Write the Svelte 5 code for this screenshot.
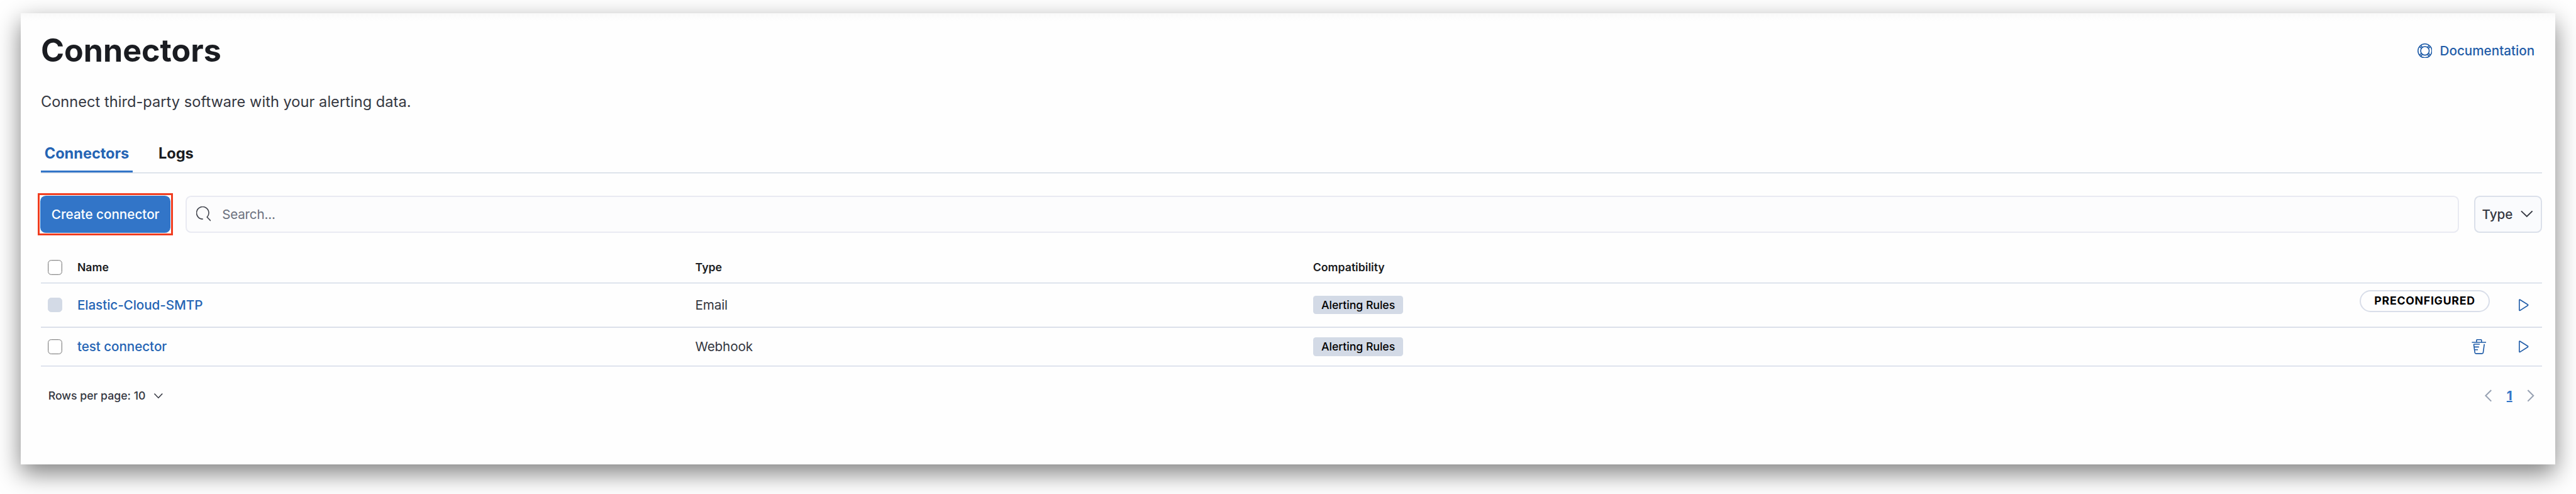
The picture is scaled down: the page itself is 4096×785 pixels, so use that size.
<script>
  const rows = [
    { name: 'Elastic-Cloud-SMTP', type: 'Email', tag: 'Alerting Rules', preconfigured: true },
    { name: 'test connector', type: 'Webhook', tag: 'Alerting Rules', preconfigured: false }
  ];
</script>

{#snippet play()}
  <svg class="icon" viewBox="0 0 16 16"><path d="M3.3 2.6v10.8c0 .4.4.6.7.4l8.4-5.3c.4-.2.4-.8 0-1L4 2.2c-.3-.2-.7 0-.7.4Z" /></svg>
{/snippet}

<main class="card">
  <header class="head">
    <h1>Connectors</h1>
    <a class="docs" href="#docs">
      <svg class="icon" viewBox="0 0 16 16">
        <circle cx="8" cy="8" r="7.5" /><circle cx="8" cy="8" r="4.6" />
        <path d="M3.5 2.2 5.5 4.5M2.2 3.5 4.5 5.5M12.5 2.2 10.5 4.5M13.8 3.5 11.5 5.5M3.5 13.8 5.5 11.5M2.2 12.5 4.5 10.5M12.5 13.8 10.5 11.5M13.8 12.5 11.5 10.5" />
      </svg>
      <span>Documentation</span>
    </a>
  </header>
  <p class="desc">Connect third-party software with your alerting data.</p>

  <nav class="tabs">
    <a class="tab active" href="#connectors">Connectors</a>
    <a class="tab" href="#logs">Logs</a>
  </nav>

  <div class="toolbar">
    <div class="highlight"><button class="create">Create connector</button></div>
    <div class="search">
      <svg class="icon" viewBox="0 0 16 16"><path d="M7.3 13.6A6.6 6.6 0 1 1 11.7 11.6L15.6 15.6" /></svg>
      <span>Search...</span>
    </div>
    <button class="filter"><span>Type</span>
      <svg class="icon" viewBox="0 0 16 16"><path d="m2 5 6 5.8L14 5" /></svg>
    </button>
  </div>

  <section class="table">
    <div class="row header">
      <i class="check"></i><b>Name</b><b>Type</b><b>Compatibility</b><span></span>
    </div>
    {#each rows as r}
      <div class="row" class:first={r.preconfigured}>
        <i class="check" class:disabled={r.preconfigured}></i>
        <a href="#edit">{r.name}</a>
        <span class="type">{r.type}</span>
        <span class="badge">{r.tag}</span>
        <div class="actions">
          {#if r.preconfigured}
            <span class="pill">PRECONFIGURED</span>
          {:else}
            <svg class="icon" viewBox="0 0 16 16">
              <path d="M.3 3.4h15.4M5.3 3.4V1.3c0-.5.3-.8.8-.8h3.8c.5 0 .8.3.8.8v2.1M2.3 5.4h6.5M2.3 5.4l1.2 9c.1.7.5 1.1 1.2 1.1h6.6c.7 0 1.1-.4 1.2-1.1l1.2-9M3 8.4h5M3.4 11.4h3.4" />
            </svg>
          {/if}
          {@render play()}
        </div>
      </div>
    {/each}
  </section>

  <footer class="foot">
    <div class="per"><span>Rows per page: 10</span>
      <svg class="icon" viewBox="0 0 16 16"><path d="m2.2 5 5.8 6 5.8-6" /></svg>
    </div>
    <div class="pages">
      <svg class="icon" viewBox="0 0 16 16"><path d="M11 2 5 8l6 6" /></svg>
      <span class="num">1</span>
      <svg class="icon" viewBox="0 0 16 16"><path d="m5 2 6 6-6 6" /></svg>
    </div>
  </footer>
</main>

<style>
  :global(html) { font-size: 98.367px; }
  :global(body) { background: #fff; }
  :global(#app) { height: 785px; overflow: hidden; display: flow-root; }
  * { box-sizing: border-box; }
  .card {
    margin: 0.21rem 0.34rem 0;
    height: 7.29rem;
    padding: 0.24rem 0.21rem 0 0.32rem;
    background: linear-gradient(#f9f9f9, #fefefe 12px);
    box-shadow: 0 14px 36px rgba(0, 0, 0, 0.5);
    font-family: Inter, sans-serif;
    font-size: 0.21rem;
    line-height: 0.3rem;
    color: #343741;
  }
  a { text-decoration: none; color: #2464b4; }
  button { font: inherit; padding: 0; cursor: pointer; }
  .icon { width: 0.24rem; height: 0.24rem; flex: none; fill: none; stroke: currentColor; stroke-width: 1.1; display: block; }
  .head { display: flex; justify-content: space-between; align-items: center; height: 0.74rem; }
  h1 { margin: 0; font-size: 0.51rem; font-weight: 700; color: #1a1c21; line-height: 0.74rem; }
  .docs { display: flex; align-items: center; gap: 0.125rem; margin-right: 0.12rem; font-weight: 500; color: #1f5ca8; }
  .desc { margin: 0.27rem 0 0; font-size: 0.24rem; line-height: 0.36rem; letter-spacing: 0.0003rem; }
  .tabs { display: flex; gap: 0.355rem; margin-top: 0.33rem; height: 0.66rem; box-shadow: inset 0 -1px #eef1f6, inset 0 -2px #d0d7e3; }
  .tab { height: 0.64rem; padding: 0 0.06rem; line-height: 0.67rem; font-size: 0.24rem; font-weight: 700; color: #1a1c21; letter-spacing: -0.0005rem; }
  .tab.active { color: #2464b4; border-bottom: 3px solid #3275c8; }
  .toolbar { display: flex; align-items: center; margin-top: 0.305rem; margin-left: -0.05rem; height: 0.69rem; }
  .highlight { border: 3px solid #f03d20; padding: 1px; width: 2.19rem; height: 0.68rem; display: flex; }
  .create { flex: 1; border: 0; border-radius: 0.09rem; background: #3275c8; color: #fff; font-weight: 500; }
  .search { flex: 1; height: 0.6rem; margin: 0 0.24rem 0 0.2rem; border: 2px solid #e9eaf2; border-radius: 0.09rem; background: #fcfcfd; display: flex; align-items: center; gap: 0.18rem; padding-left: 0.15rem; color: #6c727f; letter-spacing: -0.002rem; }
  .search .icon { color: #43464f; }
  .filter { width: 1.1rem; height: 0.6rem; border: 2px solid #dbe0ea; border-radius: 0.09rem; background: #fafbfd; display: flex; align-items: center; justify-content: space-between; padding: 0 0.1rem 0 0.11rem; font-weight: 500; color: #343741; }
  .filter .icon { stroke-width: 1.3; }
  .row { display: grid; grid-template-columns: 0.48rem 9.99rem 9.985rem 1fr auto; align-items: center; height: 0.62rem; padding-left: 0.11rem; border-bottom: 1px solid #d0d7e5; box-shadow: 0 1px #eef1f6; }
  .header { height: 0.77rem; padding-top: 0.27rem; font-size: 0.18rem; color: #1a1c21; }
  .header b { font-weight: 600; }
  .row.first { height: 0.72rem; border-bottom: 2px solid #dbe0ea; box-shadow: none; }
  .row a { font-weight: 500; letter-spacing: -0.0006rem; }
  .type { letter-spacing: -0.0015rem; }
  .check { width: 0.24rem; height: 0.24rem; border: 1px solid #8c8c8c; box-shadow: inset 0 0 0 1px #dedede; border-radius: 0.055rem; background: #fff; }
  .check.disabled { border-color: #d3dae6; background: #d3dae6; box-shadow: none; }
  .badge { justify-self: start; height: 0.3rem; width: 1.46rem; text-align: center; background: #d3dae6; border-radius: 0.045rem; font-size: 0.18rem; font-weight: 500; letter-spacing: -0.0005rem; color: #000; white-space: nowrap; }
  .actions { display: flex; align-items: center; gap: 0.48rem; margin-right: 0.18rem; color: #1f5ca8; }
  .pill { height: 0.36rem; width: 2.11rem; margin-bottom: 0.12rem; margin-right: -0.06rem; border: 2px solid #d9dee9; border-radius: 0.18rem; text-align: center; line-height: 0.31rem; font-size: 0.18rem; font-weight: 700; letter-spacing: 0.0075rem; color: #000; }
  .foot { display: flex; justify-content: space-between; align-items: center; margin-top: 0.315rem; height: 0.32rem; padding: 0 0.06rem 0 0.12rem; }
  .per { display: flex; align-items: center; gap: 0.12rem; font-size: 0.18rem; font-weight: 500; }
  .per .icon { width: 0.18rem; height: 0.18rem; stroke-width: 1.4; }
  .pages { display: flex; align-items: center; gap: 0.18rem; color: #98a2b3; }
  .pages .icon { stroke-width: 1.4; }
  .num { font-weight: 700; color: #3275c8; text-decoration: underline; text-decoration-thickness: 2px; }
</style>
